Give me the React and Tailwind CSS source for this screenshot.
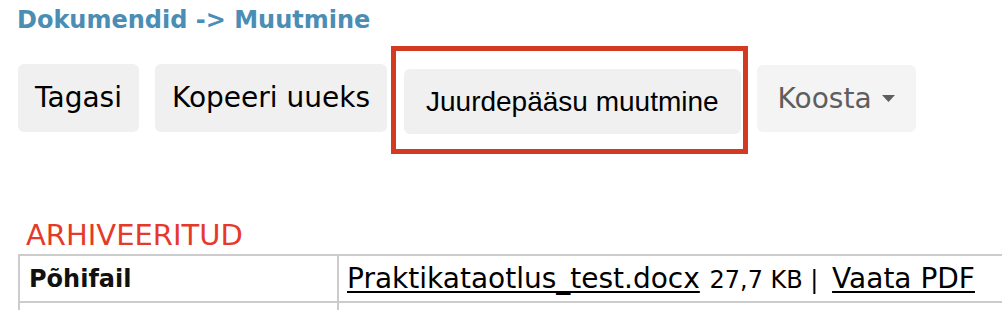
export default function App() {
  return (
    <div className="w-[1002px] h-[310px] overflow-hidden bg-white font-['DejaVu_Sans',sans-serif] text-black">
      {/* Breadcrumb */}
      <h1 className="pl-[17px] pt-[6px] text-[24px] leading-[28px] font-bold text-[#4a8db5]">
        Dokumendid -&gt; Muutmine
      </h1>

      {/* Toolbar */}
      <div className="flex items-start pl-[18px] mt-[30px]">
        <button className="h-[68px] px-[17px] rounded-[6px] bg-[#f0f0f0] text-[28px]">Tagasi</button>
        <button className="ml-[16px] h-[68px] px-[17px] rounded-[6px] bg-[#f0f0f0] text-[28px]">Kopeeri uueks</button>
        <div className="relative ml-[17px] mt-[5px]">
          <button className="h-[65px] px-[22px] rounded-[6px] bg-[#f0f0f0] font-['Liberation_Sans',sans-serif] text-[28px]">
            Juurdepääsu muutmine
          </button>
          <div className="absolute left-[-13px] top-[-23px] right-[-7px] bottom-[-20px] border-[5px] border-[#d23a22] pointer-events-none" />
        </div>
        <button className="ml-[16px] mt-[1px] h-[67px] px-[21px] rounded-[6px] bg-[#f4f4f4] text-[28px] text-[#5e5e5e] flex items-center gap-[10px]">
          Koosta
          <svg width="13" height="7" viewBox="0 0 13 7"><path d="M0 0h13L6.5 7z" fill="#5e5e5e" /></svg>
        </button>
      </div>

      {/* Archived label */}
      <div className="pl-[26px] mt-[86px] text-[29px] leading-[30px] text-[#e53a2a]">ARHIVEERITUD</div>

      {/* Files table */}
      <table className="ml-[18px] mt-[4px] w-[1000px] border-collapse">
        <tbody>
          <tr className="h-[47px]">
            <td className="w-[319px] border-2 border-[#cccccc] pl-[9px] text-[24px] font-bold text-[#111]">Põhifail</td>
            <td className="border-2 border-[#cccccc] pl-[8px] text-[28px]">
              <a className="underline decoration-2 underline-offset-[3px]">Praktikataotlus_test.docx</a>
              <span className="text-[24px] ml-[2px]"> 27,7 KB | </span>
              <a className="ml-[6px] underline decoration-2 underline-offset-[3px]">Vaata PDF</a>
            </td>
          </tr>
          <tr className="h-[47px]">
            <td className="border-2 border-[#cccccc]"></td>
            <td className="border-2 border-[#cccccc]"></td>
          </tr>
        </tbody>
      </table>
    </div>
  )
}
